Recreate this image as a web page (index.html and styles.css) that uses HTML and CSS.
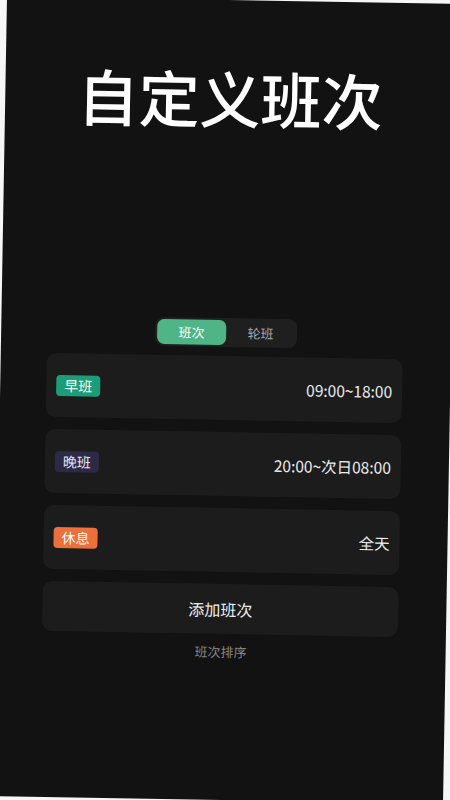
FILE: index.html
```html
<!DOCTYPE html>
<html lang="zh-CN">
<head>
    <meta charset="UTF-8">
    <meta name="viewport" content="width=device-width, initial-scale=1.0">
    <title>自定义班次</title>
    <link rel="stylesheet" href="styles.css">
</head>
<body>
    <div class="screen">
        <h1 class="title">自定义班次</h1>

        <div class="tabs">
            <div class="segment">
                <span class="seg-item active">班次</span>
                <span class="seg-item">轮班</span>
            </div>
        </div>

        <div class="shift-list">
            <div class="shift-card">
                <span class="badge badge-morning">早班</span>
                <span class="shift-time">09:00~18:00</span>
            </div>
            <div class="shift-card">
                <span class="badge badge-night">晚班</span>
                <span class="shift-time">20:00~次日08:00</span>
            </div>
            <div class="shift-card">
                <span class="badge badge-rest">休息</span>
                <span class="shift-time">全天</span>
            </div>
            <button type="button" class="add-btn">添加班次</button>
        </div>

        <p class="sort-link">班次排序</p>
    </div>
</body>
</html>
```

FILE: styles.css
```css
html, body {
    margin: 0;
    padding: 0;
}

body {
    width: 450px;
    height: 800px;
    overflow: hidden;
    background-color: #f6f6f6;
    font-family: "Noto Sans CJK SC", "Noto Sans", sans-serif;
}

.screen {
    width: 450px;
    height: 800px;
    background-color: #121212;
    transform: rotate(1deg);
    box-sizing: border-box;
}

.title {
    margin: 0;
    padding-top: 66px;
    font-size: 61px;
    line-height: 62px;
    font-weight: 500;
    color: #ffffff;
    text-align: center;
}

.tabs {
    display: flex;
    justify-content: center;
    margin-top: 190px;
}

.segment {
    display: flex;
    padding: 2px;
    background-color: #1f1f1f;
    border-radius: 9px;
}

.seg-item {
    width: 69px;
    height: 25px;
    line-height: 25px;
    text-align: center;
    font-size: 13px;
    color: #a8a8a8;
    border-radius: 7px;
}

.seg-item.active {
    background-color: #4fb586;
    color: #ffffff;
}

.shift-list {
    display: flex;
    flex-direction: column;
    gap: 12px;
    margin: 9px 48px 0 46px;
}

.shift-card {
    display: flex;
    justify-content: space-between;
    align-items: center;
    height: 64px;
    padding: 0 10px;
    background-color: #1c1c1c;
    border-radius: 10px;
}

.badge {
    height: 21px;
    line-height: 21px;
    padding: 0 8px;
    font-size: 14px;
    color: #ffffff;
    border-radius: 4px;
}

.badge-morning {
    background-color: #1b9d79;
}

.badge-night {
    background-color: #2d2a48;
    color: #e6e6ee;
}

.badge-rest {
    background-color: #ec6f3c;
}

.shift-time {
    font-size: 15.5px;
    color: #ececec;
}

.add-btn {
    height: 50px;
    border: none;
    border-radius: 10px;
    background-color: #1c1c1c;
    color: #f0f0f0;
    font-family: inherit;
    font-size: 16px;
}

.sort-link {
    margin: 9px 0 0;
    text-align: center;
    font-size: 13px;
    line-height: 18px;
    color: #858585;
}
```
